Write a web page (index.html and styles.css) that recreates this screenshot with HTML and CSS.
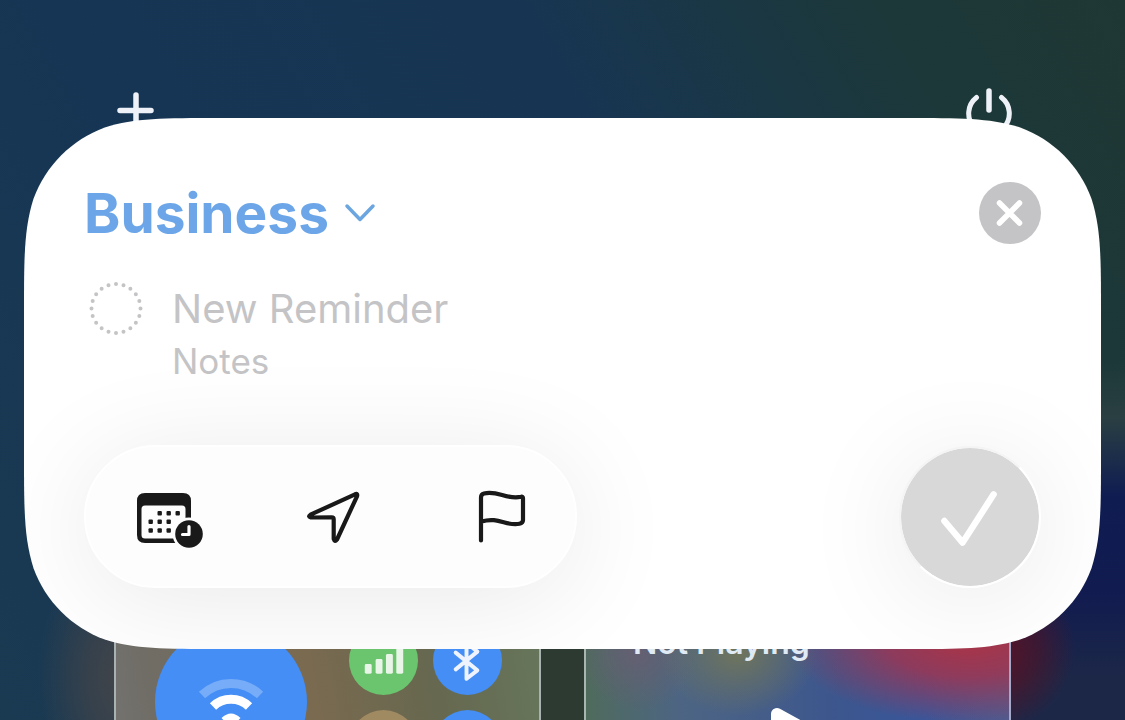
FILE: index.html
```
<!DOCTYPE html>
<html lang="en">
<head>
<meta charset="utf-8">
<meta name="viewport" content="width=device-width, initial-scale=1">
<title>New Reminder</title>
<link rel="stylesheet" href="styles.css">
</head>
<body>
<main class="screen">
  <section class="controls" aria-label="Control Center">
    <header class="controls-top">
      <button class="plain" type="button" aria-label="Add a control">
        <svg class="top-icon" viewBox="0 0 48 48"><path d="M24 7v32M8 22.500h31" stroke-width="5.500"/></svg>
      </button>
      <button class="plain" type="button" aria-label="Power">
        <svg class="top-icon" viewBox="0 0 48 48"><path d="M24 3v19" stroke-width="5.500"/><path d="M11.500 9.500a20.300 20.300 0 1 0 25 0" stroke-width="5"/></svg>
      </button>
    </header>
    <div class="panels">
      <div class="panel connectivity">
        <button class="toggle toggle-large blue" type="button" aria-label="Wi-Fi">
          <svg viewBox="0 0 152 152">
            <g fill="none" stroke="#fff" stroke-width="9">
              <path d="M47 69a42 42 0 0 1 58 0" opacity=".27"/>
              <path d="M58 80.500a26 26 0 0 1 36 0"/>
            </g>
            <path d="M66.500 92q9.500-9 19 0l-9.500 10z" fill="#fff"/>
          </svg>
        </button>
        <div class="toggles">
          <button class="toggle green" type="button" aria-label="Cellular">
            <svg viewBox="0 0 70 70" fill="#e9f5e8"><rect x="16" y="38.500" width="7" height="10" rx="1.500"/><rect x="27" y="33.500" width="7" height="15" rx="1.500"/><rect x="37.500" y="28.500" width="7" height="20" rx="1.500"/><rect x="48" y="20.500" width="7" height="28" rx="1.500"/></svg>
          </button>
          <button class="toggle blue" type="button" aria-label="Bluetooth">
            <svg viewBox="0 0 70 70"><path d="M23 27l22 18-11 8.500V17l11 9-22 18" fill="none" stroke="#eef3fd" stroke-width="4" stroke-linecap="round" stroke-linejoin="round"/></svg>
          </button>
          <button class="toggle tan" type="button" aria-label="Hotspot"></button>
          <button class="toggle blue" type="button" aria-label="AirDrop"></button>
        </div>
      </div>
      <div class="panel player">
        <p class="track">Not Playing</p>
        <button class="plain" type="button" aria-label="Play">
          <svg class="play" viewBox="0 0 60 60"><path d="M9 8v44l40-22z" fill="#fff" stroke="#fff" stroke-width="12" stroke-linejoin="round"/></svg>
        </button>
      </div>
    </div>
  </section>

  <form class="card">
    <div class="card-head">
      <div class="list-picker">
        <select class="list-select" aria-label="List"><option>Business</option></select>
        <svg class="chevron" viewBox="0 0 32 24"><path d="M3 5l13 13.500L29 5"/></svg>
      </div>
      <button class="close" type="button" aria-label="Close">
        <svg viewBox="0 0 62 62"><path d="M20.500 21l20 20M40.500 21L20.500 41"/></svg>
      </button>
    </div>

    <div class="entry">
      <svg class="ring" viewBox="0 0 56 56" aria-hidden="true"><circle cx="28" cy="28.500" r="24.500" pathLength="20"/></svg>
      <div class="fields">
        <input class="field title" type="text" placeholder="New Reminder" aria-label="Title">
        <input class="field notes" type="text" placeholder="Notes" aria-label="Notes">
      </div>
    </div>

    <div class="card-foot">
      <div class="tools">
        <button class="tool" type="button" aria-label="Date and time">
          <svg viewBox="0 0 80 80">
            <path fill="#191919" fill-rule="evenodd" d="M20 16h39q8 0 8 8v34q0 8-8 8H21q-8 0-8-8V24q0-8 8-8zM21 28.500q-3.500 0-3.500 3.500v26q0 3.500 3.500 3.500h37q3.500 0 3.500-3.500V32q0-3.500-3.500-3.500z"/>
            <g fill="#191919">
              <rect x="33.500" y="34" width="4.400" height="4.400" rx="1"/><rect x="42.500" y="34" width="4.400" height="4.400" rx="1"/><rect x="51.500" y="34" width="4.400" height="4.400" rx="1"/>
              <rect x="24.500" y="42.500" width="4.400" height="4.400" rx="1"/><rect x="33.500" y="42.500" width="4.400" height="4.400" rx="1"/><rect x="42.500" y="42.500" width="4.400" height="4.400" rx="1"/>
              <rect x="24.500" y="51.300" width="4.400" height="4.400" rx="1"/><rect x="33.500" y="51.300" width="4.400" height="4.400" rx="1"/><rect x="42.500" y="51.300" width="4.400" height="4.400" rx="1"/>
            </g>
            <circle cx="65" cy="57" r="16.500" fill="#fdfdfd"/>
            <circle cx="65" cy="57" r="13.800" fill="#191919"/>
            <path d="M65 49.500V57.500H58.500" fill="none" stroke="#fdfdfd" stroke-width="3.200" stroke-linecap="round" stroke-linejoin="round"/>
          </svg>
        </button>
        <button class="tool" type="button" aria-label="Location">
          <svg class="line" viewBox="0 0 80 80"><path d="M19.500 37.700L64 17.300q3-1.200 2 2L46 62.500q-2.300 3-3.300-.5V42.300q0-2-2-2L19.800 40.500q-3.300-.8-.3-2.800z"/></svg>
        </button>
        <button class="tool" type="button" aria-label="Flag">
          <svg class="line" viewBox="0 0 80 80"><path d="M24 63.500V20.500q0-3.200 3-4c14-3.500 22 6.500 37 3.300q2-.5 2 1.500V43q0 3-3.500 3.700C49 49.500 42 39.500 24.500 44.500"/></svg>
        </button>
      </div>
      <button class="done" type="submit" aria-label="Add reminder">
        <svg viewBox="0 0 140 140"><path d="M44 74L62.500 96 94 47"/></svg>
      </button>
    </div>
  </form>
</main>
</body>
</html>
```
FILE: styles.css
```
* { box-sizing: border-box; }

body {
  margin: 0;
  font-family: Inter, "Liberation Sans", sans-serif;
}

button {
  padding: 0;
  border: 0;
  background: none;
  cursor: pointer;
}

svg { display: block; }

.screen {
  position: relative;
  height: 100vh;
  min-height: 660px;
  overflow: hidden;
  background:
    radial-gradient(ellipse 85px 85px at 88% 90%, #5c1224 0%, #54122499 55%, transparent 100%),
    radial-gradient(ellipse 85px 140px at 11% 94%, #444549 0%, #44454999 50%, transparent 100%),
    radial-gradient(ellipse 70px 200px at 50% 100%, #2d3a31 0%, #2d3a31 60%, transparent 100%),
    linear-gradient(180deg, transparent 50%, #2a3f42 58%, #0f1c52 69%, #111b50 82%, #1c2748 94%) right / 116px 100% no-repeat,
    linear-gradient(60deg, #1a3a52 0%, #163554 30%, #173553 60%, #1a3744 74%, #1c3839 84%, #1f3734 100%);
}

/* Controls behind the card */
.controls-top {
  display: flex;
  justify-content: space-between;
  padding: 88px 112px 0;
}

.top-icon {
  width: 48px;
  height: 48px;
  fill: none;
  stroke: #eef2f8;
  stroke-linecap: round;
}

.panels {
  display: grid;
  grid-template-columns: 1fr 1fr;
  gap: 43px;
  margin-top: 450px;
  padding: 0 114px;
}

.panel {
  height: 427px;
  border: 2px solid #a9b2b3;
}

.connectivity {
  display: flex;
  justify-content: space-between;
  align-items: flex-start;
  padding: 38px 37px 38px 39px;
  background: linear-gradient(80deg, #77787a 0%, #706d66 18%, #7a6a50 50%, #66684f 75%, #66775c 100%);
}

.toggles {
  display: grid;
  grid-template-columns: 69px 69px;
  gap: 15px;
}

.toggle {
  width: 69px;
  height: 69px;
  border-radius: 50%;
}

.toggle-large {
  width: 152px;
  height: 152px;
}

.blue { background: #448ef6; }
.green { background: #6bc56f; }
.tan { background: #a08a62; }

.player {
  padding: 36px 47px;
  border-color: #a3a9c6;
  border-left-color: #a9b5b0;
  background:
    radial-gradient(ellipse 180px 85px at 90% 12%, #ac3345 0%, #a2344ecc 45%, transparent 100%),
    radial-gradient(ellipse 80px 65px at 36% 15%, #70755b 0%, #70755b99 40%, transparent 100%),
    radial-gradient(ellipse 60px 60px at 12% 15%, #655f72 0%, transparent 100%),
    linear-gradient(90deg, #4f6b5c 0%, #4d6583 22%, #3c568e 60%, #39569a 80%, #4f5a8e 100%);
}

.track {
  margin: 0 0 44px;
  color: #dfeaf4;
  font-size: 32px;
  font-weight: 600;
  line-height: 38px;
}

.play {
  width: 60px;
  height: 60px;
  margin-left: 135px;
}

/* Card: continuous corners, stretched between by the nine-slice image */
.card {
  position: absolute;
  top: 118px;
  left: 24px;
  right: 24px;
  padding: 64px 60px 61px;
  overflow: hidden;
  border: 0 solid transparent;
  border-radius: 128px;
  border-image: url("data:image/svg+xml,%3Csvg xmlns='http://www.w3.org/2000/svg' width='440' height='440'%3E%3Cpath fill='white' d='M196 0H244C301 0 329 0 359.200 9.500C392.200 21.500 418.500 47.800 430.500 80.800C440 111 440 139 440 196V244C440 301 440 329 430.500 359.200C418.500 392.200 392.200 418.500 359.200 430.500C329 440 301 440 244 440H196C139 440 111 440 80.800 430.500C47.800 418.500 21.500 392.200 9.500 359.200C0 329 0 301 0 244V196C0 139 0 111 9.500 80.800C21.500 47.800 47.800 21.500 80.800 9.500C111 0 139 0 196 0Z'/%3E%3C/svg%3E") 200 fill / 200px stretch;
}

.card-head {
  display: flex;
  justify-content: space-between;
  align-items: center;
}

.list-picker {
  display: flex;
  align-items: center;
  gap: 15px;
}

.list-select {
  appearance: none;
  padding: 0;
  border: 0;
  background: none;
  color: #6ca6e8;
  font: 700 55px/62px Inter, "Liberation Sans", sans-serif;
}

.chevron {
  width: 32px;
  height: 24px;
  fill: none;
  stroke: #6ca6e0;
  stroke-width: 3.500;
  stroke-linecap: round;
  stroke-linejoin: round;
}

.close {
  width: 62px;
  height: 62px;
  border-radius: 50%;
  background: #c4c4c6;
}

.close svg {
  fill: none;
  stroke: #fff;
  stroke-width: 5.500;
  stroke-linecap: round;
}

.entry {
  display: flex;
  gap: 28px;
  margin-top: 36px;
  padding-left: 4px;
}

.ring {
  flex: none;
  width: 56px;
  height: 56px;
  fill: none;
  stroke: #c4c4c6;
  stroke-width: 4;
  stroke-linecap: round;
  stroke-dasharray: 0 1;
}

.fields {
  display: flex;
  flex: 1;
  flex-direction: column;
}

.field {
  width: 100%;
  padding: 0;
  border: 0;
  outline: 0;
  background: none;
  color: #1c1c1e;
  font-family: inherit;
}

.field::placeholder { color: #c4c4c6; opacity: 1; }

.title { height: 56px; font-size: 40px; }
.notes { height: 50px; font-size: 35px; }

.card-foot {
  display: flex;
  justify-content: space-between;
  align-items: center;
  margin-top: 59px;
}

.tools {
  display: flex;
  justify-content: space-between;
  align-items: center;
  flex: 0 1 493px;
  height: 143px;
  padding: 0 38px;
  border: 2px solid #fff;
  border-radius: 72px;
  background: #fdfdfd;
  box-shadow: 0 12px 110px rgba(0, 0, 0, 0.09);
}

.tool, .tool svg { width: 80px; height: 80px; }

.line {
  fill: none;
  stroke: #191919;
  stroke-width: 4.200;
  stroke-linecap: round;
  stroke-linejoin: round;
}

.done {
  width: 142px;
  height: 142px;
  border: 2px solid #fff;
  border-color: #f4f4f4 #fff #fff #f4f4f4;
  border-radius: 50%;
  background: #d8d8d8;
  background-clip: padding-box;
  box-shadow: 0 12px 110px rgba(0, 0, 0, 0.09);
}

.done svg {
  fill: none;
  stroke: #fff;
  stroke-width: 6.500;
  stroke-linecap: round;
  stroke-linejoin: round;
}
```
